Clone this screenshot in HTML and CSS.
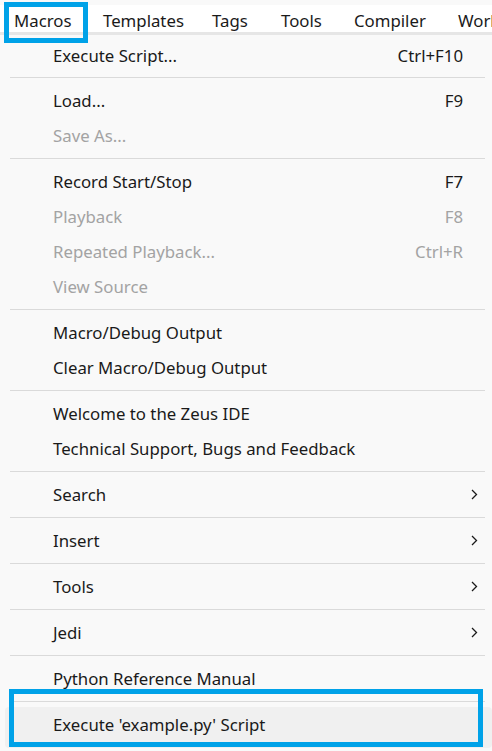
FILE: index.html
```html
<!DOCTYPE html>
<html>
<head>
<meta charset="utf-8">
<link rel="stylesheet" href="styles.css">
</head>
<body>
<div class="bar">
  <span class="bar-item">Macros</span>
  <span class="bar-item">Templates</span>
  <span class="bar-item">Tags</span>
  <span class="bar-item">Tools</span>
  <span class="bar-item">Compiler</span>
  <span class="bar-item">Workspace</span>
</div>
<div class="menu">
  <div class="row"><span>Execute Script...</span><span class="key">Ctrl+F10</span></div>
  <div class="sep sep-first"></div>
  <div class="row"><span>Load...</span><span class="key">F9</span></div>
  <div class="row dis"><span>Save As...</span></div>
  <div class="sep"></div>
  <div class="row"><span>Record Start/Stop</span><span class="key">F7</span></div>
  <div class="row dis"><span>Playback</span><span class="key">F8</span></div>
  <div class="row dis"><span>Repeated Playback...</span><span class="key">Ctrl+R</span></div>
  <div class="row dis"><span>View Source</span></div>
  <div class="sep"></div>
  <div class="row"><span>Macro/Debug Output</span></div>
  <div class="row"><span>Clear Macro/Debug Output</span></div>
  <div class="sep"></div>
  <div class="row"><span>Welcome to the Zeus IDE</span></div>
  <div class="row"><span>Technical Support, Bugs and Feedback</span></div>
  <div class="sep"></div>
  <div class="row"><span>Search</span><svg class="chev" width="7" height="11" viewBox="0 0 7 11"><path d="M1 1 L5.5 5.5 L1 10" fill="none" stroke="#1a1a1a" stroke-width="1.3"/></svg></div>
  <div class="sep"></div>
  <div class="row"><span>Insert</span><svg class="chev" width="7" height="11" viewBox="0 0 7 11"><path d="M1 1 L5.5 5.5 L1 10" fill="none" stroke="#1a1a1a" stroke-width="1.3"/></svg></div>
  <div class="sep"></div>
  <div class="row"><span>Tools</span><svg class="chev" width="7" height="11" viewBox="0 0 7 11"><path d="M1 1 L5.5 5.5 L1 10" fill="none" stroke="#1a1a1a" stroke-width="1.3"/></svg></div>
  <div class="sep"></div>
  <div class="row"><span>Jedi</span><svg class="chev" width="7" height="11" viewBox="0 0 7 11"><path d="M1 1 L5.5 5.5 L1 10" fill="none" stroke="#1a1a1a" stroke-width="1.3"/></svg></div>
  <div class="sep"></div>
  <div class="row"><span>Python Reference Manual</span></div>
  <div class="sep"></div>
  <div class="row hot"><span>Execute 'example.py' Script</span></div>
</div>
<div class="mark mark-top"></div>
<div class="mark mark-bottom"></div>
</body>
</html>
```
FILE: styles.css
```css
html, body {
  margin: 0;
  padding: 0;
}
body {
  width: 492px;
  height: 751px;
  overflow: hidden;
  background: #f9f9f9;
  font-family: "Noto Sans", "Open Sans", sans-serif;
  font-size: 16.8px;
  color: #1a1a1a;
  position: relative;
}
.bar {
  margin-top: 5px;
  height: 27px;
  background: #ffffff;
  border-bottom: 3px solid #e6e6e6;
  display: grid;
  grid-template-columns: 89px 109px 69px 73px 104px auto;
  white-space: nowrap;
  padding-left: 14px;
  overflow: hidden;
}
.bar-item {
  line-height: 27px;
  padding-top: 2px;
}
.menu {
  padding-top: 3px;
}
.row {
  height: 35px;
  display: flex;
  align-items: center;
  justify-content: space-between;
  padding-left: 53px;
  padding-right: 29px;
  white-space: nowrap;
}
.row.dis {
  color: #a3a3a3;
}
.key {
  text-align: right;
}
.chev {
  margin-right: -15px;
}
.sep {
  height: 1px;
  background: #dadada;
  margin: 5px 7px 5px 10px;
}
.sep.sep-first {
  margin-top: 4px;
}
.row.hot {
  background: #f0f0f0;
  border-radius: 4px;
  margin: 0 0 0 5px;
  padding-left: 48px;
  height: 35px;
  padding-bottom: 6px;
}
.mark {
  position: absolute;
  border: 5px solid #00a2e8;
  box-sizing: border-box;
}
.mark-top {
  left: 4px;
  top: 2px;
  width: 84px;
  height: 41px;
}
.mark-bottom {
  left: 9px;
  top: 689px;
  width: 474px;
  height: 58px;
}
```
